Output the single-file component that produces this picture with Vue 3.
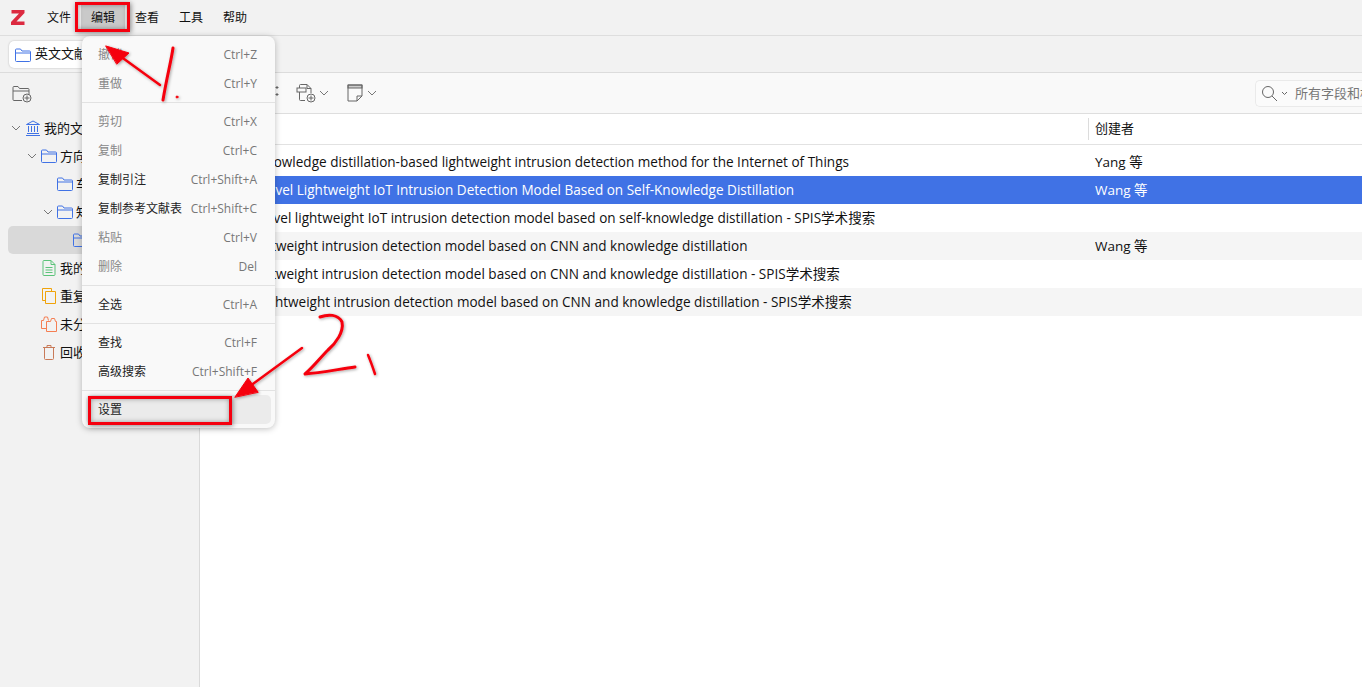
<script setup>
const menus = ['文件', '编辑', '查看', '工具', '帮助']
const tree = [
  { label: '我的文库', indent: 11, twisty: true, icon: 'lib' },
  { label: '方向一', indent: 27, twisty: true, icon: 'folder' },
  { label: '车联网', indent: 57, twisty: false, icon: 'folder' },
  { label: '知识蒸馏', indent: 43, twisty: true, icon: 'folder' },
  { label: '英文文献', indent: 65, twisty: false, icon: 'folder', selected: true },
  { label: '我的出版物', indent: 41, twisty: false, icon: 'pub' },
  { label: '重复条目', indent: 41, twisty: false, icon: 'dup' },
  { label: '未分类条目', indent: 41, twisty: false, icon: 'unf' },
  { label: '回收站', indent: 41, twisty: false, icon: 'trash' }
]
const rows = [
  { title: 'A Knowledge distillation-based lightweight intrusion detection method for the Internet of Things', creator: 'Yang 等' },
  { title: 'A Novel Lightweight IoT Intrusion Detection Model Based on Self-Knowledge Distillation', creator: 'Wang 等', selected: true },
  { title: 'A novel lightweight IoT intrusion detection model based on self-knowledge distillation - SPIS学术搜索', creator: '' },
  { title: 'Lightweight intrusion detection model based on CNN and knowledge distillation', creator: 'Wang 等', stripe: true },
  { title: 'Lightweight intrusion detection model based on CNN and knowledge distillation - SPIS学术搜索', creator: '' },
  { title: 'A Lightweight intrusion detection model based on CNN and knowledge distillation - SPIS学术搜索', creator: '', stripe: true }
]
const menuItems = [
  { label: '撤销', key: 'Ctrl+Z', off: true },
  { label: '重做', key: 'Ctrl+Y', off: true },
  { sep: true },
  { label: '剪切', key: 'Ctrl+X', off: true },
  { label: '复制', key: 'Ctrl+C', off: true },
  { label: '复制引注', key: 'Ctrl+Shift+A' },
  { label: '复制参考文献表', key: 'Ctrl+Shift+C' },
  { label: '粘贴', key: 'Ctrl+V', off: true },
  { label: '删除', key: 'Del', off: true },
  { sep: true },
  { label: '全选', key: 'Ctrl+A' },
  { sep: true },
  { label: '查找', key: 'Ctrl+F' },
  { label: '高级搜索', key: 'Ctrl+Shift+F' },
  { sep: true },
  { label: '设置', key: '', hover: true }
]
</script>

<template>
  <div class="app">
    <header class="menubar">
      <svg class="logo" width="14" height="15" viewBox="0 0 14 15"><path d="M.5 0h13v3L5.500 11.500H13.500V15H0v-3L8 3.500H.5z" fill="#dc2a40"/></svg>
      <span v-for="m in menus" :key="m" class="menu-title" :class="{ active: m === '编辑' }">{{ m }}</span>
    </header>

    <div class="tabbar">
      <div class="tab">
        <svg width="16" height="14" viewBox="0 0 16 14"><path d="M.5 12.500V2a1 1 0 0 1 1-1h4L7 3h7.500a1 1 0 0 1 1 1v8.500a1 1 0 0 1-1 1h-13a1 1 0 0 1-1-1zM.5 5h15" fill="none" stroke="#4072e5"/></svg>
        <span class="tab-label">英文文献</span>
      </div>
    </div>

    <div class="body">
      <aside class="sidebar">
        <div class="side-tools">
          <svg width="20" height="18" viewBox="0 0 20 18" fill="none" stroke="#666"><path d="M10 15.500H2a1 1 0 0 1-1-1V2.500a1 1 0 0 1 1-1h4l1.500 2H16a1 1 0 0 1 1 1V9M1 6h16"/><circle cx="15" cy="13" r="4" fill="#f2f2f2"/><path d="M15 10.500v5M12.500 13h5"/></svg>
        </div>
        <div class="tree">
          <div v-for="t in tree" :key="t.label" class="tree-row" :class="{ selected: t.selected }" :style="{ paddingLeft: t.indent + 'px' }">
            <svg v-if="t.twisty" class="twisty" width="10" height="10" viewBox="0 0 10 10"><path d="M1 3l4 4 4-4" fill="none" stroke="#777"/></svg>
            <span class="icon">
              <svg v-if="t.icon === 'lib'" width="16" height="16" viewBox="0 0 16 16" fill="none" stroke="#4072e5"><path d="M8 1L1.500 4.500h13zM1 15.500h14M2 13.500h12M3.500 6v6M6.500 6v6M9.500 6v6M12.500 6v6"/></svg>
              <svg v-else-if="t.icon === 'folder'" width="16" height="14" viewBox="0 0 16 14" fill="none" stroke="#4072e5"><path d="M.5 12.500V2a1 1 0 0 1 1-1h4L7 3h7.500a1 1 0 0 1 1 1v8.500a1 1 0 0 1-1 1h-13a1 1 0 0 1-1-1zM.5 5h15"/></svg>
              <svg v-else-if="t.icon === 'pub'" width="14" height="16" viewBox="0 0 14 16" fill="none" stroke="#5cc37a"><path d="M1 1.500a1 1 0 0 1 1-1h7l4 4V14.500a1 1 0 0 1-1 1H2a1 1 0 0 1-1-1zM9 .5v4h4M3.500 7.500h7M3.500 10h7M3.500 12.500h7"/></svg>
              <svg v-else-if="t.icon === 'dup'" width="14" height="16" viewBox="0 0 14 16" fill="none" stroke="#f0a30a"><path d="M3 12.500H.5V.5h9V3"/><path d="M3.500 3.500h10v12h-10z"/></svg>
              <svg v-else-if="t.icon === 'unf'" width="16" height="16" viewBox="0 0 16 16" fill="none" stroke="#f57e52"><path d="M5.500 12.500H.500V4.500h2L3.500 1h3l1 3.500M5.500 5.500h4l1-3h3l1 3h1v10h-10z"/></svg>
              <svg v-else width="14" height="16" viewBox="0 0 14 16" fill="none" stroke="#c87a58"><path d="M1 3.500h12M5 3.500V1.500h4v2M2.500 3.500v11a1 1 0 0 0 1 1h7a1 1 0 0 0 1-1v-11"/></svg>
            </span>
            <span class="tree-label">{{ t.label }}</span>
          </div>
        </div>
      </aside>

      <main class="main">
        <div class="toolbar">
          <div class="tools">
            <svg class="marks" width="8" height="12" viewBox="0 0 8 12"><path d="M4 1v3M2.500 2.500h3M4 8v3M2.500 9.500h3" stroke="#666" fill="none"/></svg>
            <svg width="21" height="20" viewBox="0 0 21 20" fill="none" stroke="#666"><path d="M3.500 5V2.500a1 1 0 0 1 1-1H11l4 4V10M11 1.500v4h4M3.500 9v7.500a1 1 0 0 0 1 1H9"/><rect x="1" y="5" width="9" height="4" fill="#f9f9f9"/><circle cx="15" cy="15" r="4"/><path d="M15 12.500v5M12.500 15h5"/></svg>
            <svg class="caret" width="10" height="10" viewBox="0 0 10 10"><path d="M1 3l4 4 4-4" fill="none" stroke="#777"/></svg>
            <svg class="note" width="16" height="18" viewBox="0 0 16 18" fill="none" stroke="#666"><rect x="1" y="1" width="14" height="3" fill="#ccc"/><path d="M1 1h14v11l-5 5H1zM10 17v-5h5"/></svg>
            <svg class="caret note-caret" width="10" height="10" viewBox="0 0 10 10"><path d="M1 3l4 4 4-4" fill="none" stroke="#777"/></svg>
          </div>
          <div class="search">
            <svg class="glass" width="17" height="17" viewBox="0 0 17 17" fill="none" stroke="#666"><circle cx="7" cy="7" r="5.500"/><path d="M11 11l5 5"/></svg>
            <svg class="mini" width="7" height="5" viewBox="0 0 7 5"><path d="M1 1l2.500 2.500L6 1" fill="none" stroke="#666"/></svg>
            <span>所有字段和标签</span>
          </div>
        </div>

        <div class="table-head">
          <div class="col-title"></div>
          <div class="col-creator head-creator">创建者</div>
        </div>
        <div class="table-body">
          <div v-for="r in rows" :key="r.title" class="row" :class="{ sel: r.selected, stripe: r.stripe }">
            <div class="col-title title-text">{{ r.title }}</div>
            <div class="col-creator">{{ r.creator }}</div>
          </div>
        </div>
      </main>
    </div>

    <nav class="dropdown">
      <template v-for="(item, i) in menuItems" :key="i">
        <div v-if="item.sep" class="sep"></div>
        <div v-else class="item" :class="{ off: item.off, hover: item.hover }">
          <span>{{ item.label }}</span>
          <span class="shortcut">{{ item.key }}</span>
        </div>
      </template>
    </nav>

    <div class="mark-box box-one"></div>
    <div class="mark-box box-two"></div>

    <svg class="ink" width="1362" height="687" viewBox="0 0 1362 687">
      <defs>
        <filter id="inkShadow" x="-20%" y="-20%" width="140%" height="140%">
          <feDropShadow dx="1" dy="1" stdDeviation="1.500" flood-color="#000" flood-opacity=".35"/>
        </filter>
      </defs>
      <g filter="url(#inkShadow)" fill="none" stroke="#f5000f" stroke-linecap="round" stroke-linejoin="round">
        <path d="M160 85L120 56" stroke-width="2.500"/>
        <path d="M106 46L129 53L117 64Z" fill="#f5000f" stroke-width="1"/>
        <path d="M173 48C171 62 167 76 163 100" stroke-width="3"/>
        <circle cx="177" cy="97" r="1" fill="#f5000f" stroke-width="1"/>
        <path d="M302 348L246 389" stroke-width="2.500"/>
        <path d="M235 397L248 378L258 392Z" fill="#f5000f" stroke-width="1"/>
        <path d="M320 317C328 314 338 314 342 322C344 332 336 343 328 350C320 358 313 367 305 374C320 373 340 369 355 367" stroke-width="3"/>
        <path d="M368 355C371 362 373 368 375 374" stroke-width="2.500"/>
      </g>
    </svg>
  </div>
</template>

<style scoped>
.app {
  position: relative;
  width: 1362px;
  height: 687px;
  display: flex;
  flex-direction: column;
  overflow: hidden;
  background: #fff;
  color: #111;
  font-family: "Open Sans", "Noto Sans CJK SC", sans-serif;
  font-size: 12px;
}
.menubar {
  height: 36px;
  flex: none;
  display: flex;
  align-items: center;
  padding-left: 11px;
  box-sizing: border-box;
  background: #f2f2f2;
  border-bottom: 1px solid #dedede;
}
.logo { margin-right: 12px; }
.menu-title {
  padding: 0 10px;
  height: 26px;
  line-height: 26px;
}
.menu-title.active { background: #c9c9c9; }
.tabbar {
  height: 37px;
  flex: none;
  box-sizing: border-box;
  padding: 5px 0 0 9px;
  background: #f2f2f2;
  border-bottom: 1px solid #dcdcdc;
}
.tab {
  width: 180px;
  height: 27px;
  box-sizing: border-box;
  display: flex;
  align-items: center;
  gap: 4px;
  padding-left: 6px;
  background: #fff;
  border-radius: 5px;
  box-shadow: 0 0 2px rgba(0,0,0,.25);
  font-size: 13px;
}
.tab-label { line-height: 25px; margin-top: -2px; }
.body { flex: 1; display: flex; min-height: 0; }
.sidebar {
  width: 200px;
  flex: none;
  box-sizing: border-box;
  background: #f2f2f2;
  border-right: 1px solid #dadada;
}
.side-tools {
  height: 41px;
  display: flex;
  align-items: center;
  padding-left: 12px;
}
.tree-row {
  height: 28px;
  line-height: 28px;
  display: flex;
  align-items: center;
  box-sizing: border-box;
  font-size: 13px;
}
.tree-row.selected {
  margin-left: 8px;
  background: #d9d9d9;
  border-radius: 5px 0 0 5px;
}
.twisty { margin-right: 4px; flex: none; }
.icon { width: 16px; flex: none; display: flex; justify-content: center; align-items: center; }
.tree-label { margin-left: 3px; white-space: nowrap; }
.main { flex: 1; min-width: 0; display: flex; flex-direction: column; }
.toolbar {
  height: 41px;
  flex: none;
  box-sizing: border-box;
  display: flex;
  align-items: center;
  justify-content: space-between;
  background: #f9f9f9;
  border-bottom: 1px solid #dedede;
  overflow: hidden;
}
.tools {
  display: flex;
  align-items: center;
  padding-left: 73px;
}
.marks { margin-right: 15px; margin-top: -4px; }
.caret { margin-left: 2px; }
.note { margin-left: 18px; }
.note-caret { margin-left: 4px; }
.search {
  width: 107px;
  height: 27px;
  flex: none;
  box-sizing: border-box;
  display: flex;
  align-items: center;
  padding-left: 5px;
  overflow: hidden;
  white-space: nowrap;
  background: #fbfbfb;
  border: 1px solid #eaeaea;
  border-right: 0;
  border-radius: 5px 0 0 5px;
  color: #777;
  font-size: 13px;
  line-height: 27px;
}
.glass { flex: none; }
.mini { margin: 0 7px 0 3px; flex: none; }
.search span { flex: none; }
.table-head {
  height: 31px;
  flex: none;
  display: flex;
  align-items: center;
  box-sizing: border-box;
  border-bottom: 1px solid #e2e2e2;
  font-size: 13px;
}
.table-body { padding-top: 3px; font-size: 13.500px; }
.col-title { width: 888px; flex: none; }
.col-creator { flex: 1; padding-left: 7px; }
.head-creator { border-left: 1px solid #dcdcdc; padding-left: 6px; height: 22px; line-height: 21px; }
.row {
  height: 28px;
  line-height: 28px;
  display: flex;
  align-items: center;
  white-space: nowrap;
}
.title-text { padding-left: 45px; box-sizing: border-box; font-size: 13.550px; }
.stripe { background: #f5f5f5; }
.sel { background: #4072e5; color: #fff; }
.dropdown {
  position: absolute;
  left: 82px;
  top: 36px;
  width: 193px;
  height: 392px;
  box-sizing: border-box;
  padding: 4px;
  background: #f9f9f9;
  border-radius: 8px;
  box-shadow: 0 1px 6px rgba(0,0,0,.25);
}
.item {
  height: 29px;
  line-height: 30px;
  display: flex;
  align-items: center;
  justify-content: space-between;
  padding: 0 14px 0 12px;
  border-radius: 5px;
  color: #222;
}
.item.off { color: #888; }
.item.hover { background: #ebebeb; }
.shortcut { color: #777; font-size: 12px; }
.sep {
  height: 1px;
  margin: 4px -4px;
  background: #e2e2e2;
}
.mark-box {
  position: absolute;
  box-sizing: border-box;
  border: 3px solid #f5000f;
  box-shadow: 1px 1px 5px rgba(0,0,0,.45), inset 0 0 5px rgba(0,0,0,.35);
}
.box-one { left: 75px; top: 2px; width: 55px; height: 30px; }
.box-two { left: 88px; top: 396px; width: 144px; height: 29px; }
.ink { position: absolute; left: 0; top: 0; pointer-events: none; }
</style>
